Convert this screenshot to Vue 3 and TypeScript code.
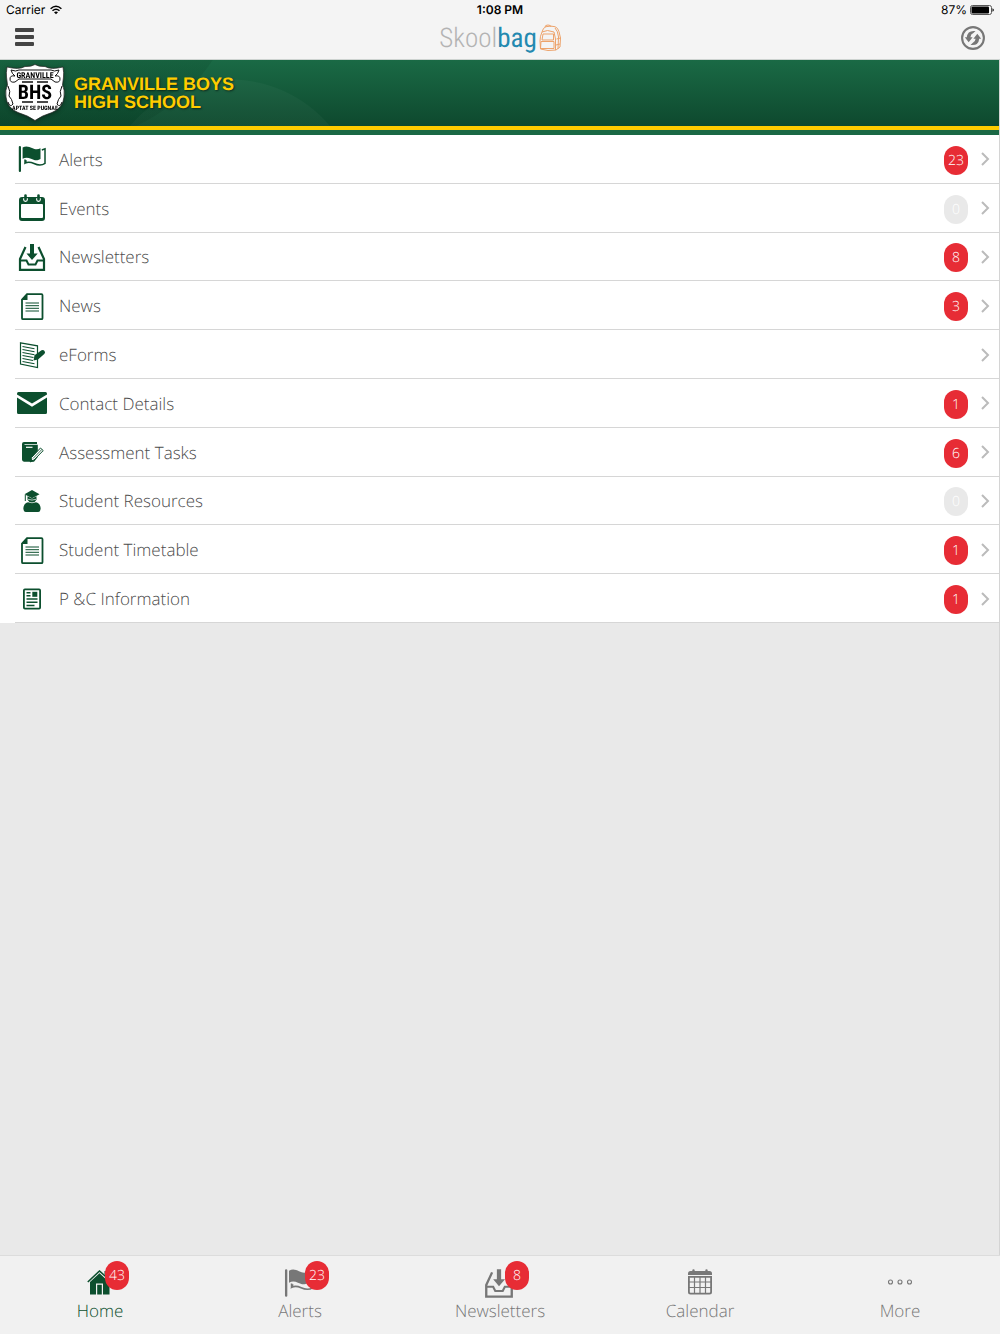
<script setup lang="ts">
interface MenuRow {
  label: string
  icon: string
  count?: number
}

interface Tab {
  label: string
  icon: string
  count?: number
  active?: boolean
  large?: boolean
}

const rows: MenuRow[] = [
  { label: 'Alerts', icon: 'flag', count: 23 },
  { label: 'Events', icon: 'events', count: 0 },
  { label: 'Newsletters', icon: 'inbox', count: 8 },
  { label: 'News', icon: 'page', count: 3 },
  { label: 'eForms', icon: 'form' },
  { label: 'Contact Details', icon: 'mail', count: 1 },
  { label: 'Assessment Tasks', icon: 'book', count: 6 },
  { label: 'Student Resources', icon: 'student', count: 0 },
  { label: 'Student Timetable', icon: 'page', count: 1 },
  { label: 'P &C Information', icon: 'article', count: 1 },
]

const tabs: Tab[] = [
  { label: 'Home', icon: 'home', count: 43, active: true },
  { label: 'Alerts', icon: 'flag', count: 23, large: true },
  { label: 'Newsletters', icon: 'inbox', count: 8, large: true },
  { label: 'Calendar', icon: 'calendar' },
  { label: 'More', icon: 'more' },
]
</script>

<template>
  <div class="app">
    <svg class="sprites" aria-hidden="true">
      <symbol id="flag" viewBox="0 0 32 32">
        <path d="M2.800 4q0-1 1.100-1T5 4v24q0 1-1.100 1t-1.100-1z" fill="currentColor" />
        <path d="M6.600 4.500C10 2.500 13 3.500 16 5s5.500 2 8.500.3V16c-4 2.200-6.500 1-9.500-.3s-5.500-1.500-8.400 0z" fill="currentColor" />
        <path d="M25.800 7l3.200-1.200v14.500c-3.500 2.500-7.500 1.800-11 .2s-6-1.800-8.800-.5l1-2.800M9 16.500v4" fill="none" stroke="currentColor" stroke-width="1.500" />
      </symbol>
      <symbol id="events" viewBox="0 0 32 32">
        <path fill-rule="evenodd" d="M6 5h20q3 0 3 3v18q0 3-3 3H6q-3 0-3-3V8q0-3 3-3zM5 13v12q0 1 1 1h20q1 0 1-1V13q0-1-1-1H6q-1 0-1 1z" fill="currentColor" />
        <path d="M9.500 6v1.500M22.500 6v1.500" stroke="#fff" stroke-width="4.800" stroke-linecap="round" />
        <path d="M6 5.600h7M19 5.600h7" stroke="currentColor" stroke-width="1.400" />
        <path d="M9.500 3.500v4M22.500 3.500v4" stroke="currentColor" stroke-width="2.600" stroke-linecap="round" />
      </symbol>
      <symbol id="inbox" viewBox="0 0 32 32">
        <path d="M9.500 6L4 18v10.800h24V18L22.500 6" fill="none" stroke="currentColor" stroke-width="2.200" />
        <path d="M4 19.500h6.500l2 4h7l2-4H28" fill="none" stroke="currentColor" stroke-width="2" />
        <path d="M14 3h4v9.500h3.700L16 19l-5.500-6.500H14z" fill="currentColor" />
      </symbol>
      <symbol id="page" viewBox="0 0 32 32">
        <path d="M11 4.200h14.500q1 0 1 1v23q0 1-1 1h-18.500q-1 0-1-1V9.500z" fill="none" stroke="currentColor" stroke-width="1.800" />
        <path d="M11.500 3.500V10H5.500z" fill="currentColor" />
        <path d="M9.500 13h13.500M9.500 15.700h13.500M9.500 18.300h13.500M9.500 21h13.500" stroke="currentColor" stroke-width="1" />
      </symbol>
      <symbol id="form" viewBox="0 0 32 32">
        <path d="M4.500 3.800l17 3v21.700l-17-3.500z" fill="none" stroke="currentColor" stroke-width="1.200" />
        <path d="M6.500 7.500l12 2.200M6.500 10.500l12 2.200M6.500 13.500l12 2.200M6.500 16.500l11 2M6.500 19.500l10.500 2M6.500 22.500l12 2.200" stroke="currentColor" stroke-width="1.100" />
        <path d="M17.500 21.500l1-5.200 7-5q1.800-1 3 .6t-.2 3l-6.300 5.600z" fill="currentColor" />
      </symbol>
      <symbol id="mail" viewBox="0 0 32 32">
        <path d="M1 6.500q0-1.500 1.500-1.500h27q1.500 0 1.500 1.500v1L16 16.500 1 7.500z" fill="currentColor" />
        <path d="M1 10.500l15 9.300 15-9.300V25.500q0 1.500-1.500 1.500h-27Q1 27 1 25.500z" fill="currentColor" />
      </symbol>
      <symbol id="book" viewBox="0 0 32 32">
        <path d="M8 6h13v2H8.500v.8H21.800V21L18 25.800H8q-2-.3-2-2.300V8q0-2 2-2z" fill="currentColor" />
        <path d="M10 11.300h6.500" stroke="#fff" stroke-width="1.200" />
        <path d="M14.500 25.500l1-4L24.500 12l2.700 2.600L18 24z" fill="#fff" stroke="currentColor" stroke-width="1" />
        <path d="M17 22.500l8.800-9M14 26l3-1.200-1.800-1.500z" stroke="currentColor" fill="currentColor" stroke-width=".8" />
      </symbol>
      <symbol id="student" viewBox="0 0 32 32">
        <path d="M16 5l7.500 4.200-7.500 4-7.500-4z" fill="currentColor" />
        <path d="M11.500 11.200l4.500 2.300 4.500-2.300v3.500q-1.500 2.900-4.500 2.900T11.500 14.700z" fill="currentColor" />
        <path d="M9.300 10v6" stroke="currentColor" stroke-width="1" />
        <path d="M8 26q-1.500-3 .5-6.500 1.300-2 3.500-2.200l4 1 4-1q2.200.2 3.500 2.200 2 3.500.5 6.500-.5 1-2 1H10q-1.500 0-2-1z" fill="currentColor" />
        <path d="M12 14.300q4 1.600 8 0" stroke="#fff" stroke-width=".7" fill="none" />
      </symbol>
      <symbol id="article" viewBox="0 0 32 32">
        <rect x="7.900" y="6.400" width="16.200" height="19.200" rx="1" fill="none" stroke="currentColor" stroke-width="1.800" />
        <path d="M10.500 9.700h4M10.500 12.800h4M10.500 16h11M10.500 19.200h11M10.500 22.400h8" stroke="currentColor" stroke-width="1.500" />
        <path d="M16.300 8.800h5v5h-5z" fill="currentColor" />
      </symbol>
      <symbol id="home" viewBox="0 0 32 32">
        <path d="M3.800 16L15.500 5l12.200 11" fill="none" stroke="currentColor" stroke-width="1.600" />
        <path d="M20.500 5h3v6l-3-2.700z" fill="currentColor" />
        <path fill-rule="evenodd" d="M6 16l9.500-8.800L25.500 16.500V28.500H6zM12 17.500v11h1.200v-9.800h4.600v9.800H19v-11z" fill="currentColor" />
      </symbol>
      <symbol id="calendar" viewBox="0 0 32 32">
        <path d="M6.500 5h19q2.500 0 2.500 2.500V9H4V7.500Q4 5 6.500 5z" fill="currentColor" />
        <path d="M9.500 4.500v2M22.500 4.500v2" stroke="currentColor" stroke-width="2.400" stroke-linecap="round" />
        <path d="M4.900 10.800h22.200v15.200q0 1.600-1.600 1.600H6.500q-1.600 0-1.600-1.600z" fill="none" stroke="currentColor" stroke-width="1.800" />
        <path d="M10.500 10v17.500M16 10v17.500M21.500 10v17.500M5 16h22M5 21.500h22" stroke="currentColor" stroke-width="1.200" />
      </symbol>
      <symbol id="more" viewBox="0 0 32 32">
        <g fill="none" stroke="currentColor" stroke-width="1.100">
          <circle cx="6.500" cy="16" r="2" /><circle cx="16" cy="16" r="2" /><circle cx="25.500" cy="16" r="2" />
        </g>
      </symbol>
    </svg>

    <header class="top">
      <div class="status">
        <span class="carrier">
          Carrier
          <svg width="12" height="10" viewBox="0 0 12 10" fill="none" stroke="#000" stroke-width="1.500" aria-hidden="true">
            <path d="M.6 3.700Q6-1.200 11.400 3.700M2.500 5.800q3.500-3 7 0" />
            <path d="M6 9.300L4 7.300q2-1.500 4 0z" fill="#000" stroke="none" />
          </svg>
        </span>
        <span class="clock">1:08 PM</span>
        <span class="power">
          87%
          <svg width="24" height="10" viewBox="0 0 24 10" aria-hidden="true">
            <rect x=".5" y=".5" width="21" height="9" rx="2" fill="none" stroke="#555" />
            <rect x="1.500" y="1.500" width="17.500" height="7" rx="1" />
            <path d="M22.500 3.200q1.300.5 1.300 1.800t-1.300 1.800z" />
          </svg>
        </span>
      </div>
      <div class="bar">
        <button class="menu" type="button" aria-label="Menu"><i></i><i></i><i></i></button>
        <div class="logo">
          <span class="skool">Skool</span><span class="bag">bag</span>
          <svg width="24" height="28" viewBox="0 0 24 28" fill="none" stroke="#eda36b" stroke-width="1" aria-hidden="true">
            <path d="M4 8q1-4.500 4-5.300 5-1.200 9 0 3 1 4 5l1.500 6.300-.5 9-4 3-8 .5-7.500-1.500-.5-8q0-5 2-9z" />
            <path d="M7 3q0-2 3-2t3 2M4 8q5-3 12 0l1.500 7v11M5 10h10.500v6H4zM3 17.500h13v7H2.500zM17 4q3 3 3.500 9l-.5 12M18.500 15l4-1M18 21l4-1" />
          </svg>
        </div>
        <button class="sync" type="button" aria-label="Refresh">
          <svg width="26" height="26" viewBox="0 0 26 26" aria-hidden="true">
            <circle cx="13" cy="13" r="10.900" fill="none" stroke="#777" stroke-width="2.100" />
            <g fill="#777">
              <path d="M15.500 6Q7.500 5 6.800 12.300H4.800l3.900 5 3.900-5h-2.200q.3-3.300 3-4.300z" />
              <path d="M10.500 20q8 1 8.700-6.300h2l-3.900-5-3.900 5h2.200q-.3 3.300-3 4.300z" />
            </g>
          </svg>
        </button>
      </div>
    </header>

    <main class="main">
      <section class="banner">
        <svg class="crest" width="60" height="58" viewBox="0 0 60 58" aria-hidden="true">
          <path d="M2 3q12 3 18-.5Q26 3 30 .5 34 3 40 2.500q6 3.500 18 .5 1 6 .5 10l-1 8q2.500 5 1.500 12-1 11-12 15.500-10 3-17 8-7-5-17-8Q2 44 1 33q-1-7 1.500-12l-1-8Q1 9 2 3z" fill="#fff" stroke="#222" stroke-width=".7" />
          <path d="M6 6q5 2 8 0h32q3 2 8 0-1 4-4 6 5-1 5 3t-5 3l-4-3H14l-4 3q-5 1-5-3t5-3q-3-2-4-6zM3 22q3 6 1 10 3 3 4 8M57 22q-3 6-1 10-3 3-4 8M8 40q-3 4-5-2M52 40q3 4 5-2" fill="none" stroke="#111" stroke-width="1" />
          <text x="30" y="14" text-anchor="middle" font-size="8">GRANVILLE</text>
          <text x="30" y="35" text-anchor="middle" font-size="20">BHS</text>
          <path d="M17 18h11M32 18h11M17 38h11M32 38h11" stroke="#111" stroke-width="1.500" />
          <text x="30" y="46" text-anchor="middle" font-size="6">APTAT SE PUGNAE</text>
        </svg>
        <h1>GRANVILLE BOYS<br>HIGH SCHOOL</h1>
      </section>

      <ul class="list">
        <li v-for="row in rows" :key="row.label">
          <a href="#">
            <svg class="icon" aria-hidden="true"><use :href="'#' + row.icon" /></svg>
            <span class="label">{{ row.label }}</span>
            <span v-if="row.count !== undefined" class="badge" :class="{ empty: row.count === 0 }">{{ row.count }}</span>
            <svg class="chevron" width="9" height="14" viewBox="0 0 9 14" fill="none" stroke="#bbb" stroke-width="2" aria-hidden="true">
              <path d="M1 1l6 6-6 6" />
            </svg>
          </a>
        </li>
      </ul>
    </main>

    <nav class="tabs">
      <a v-for="tab in tabs" :key="tab.label" href="#" :class="{ active: tab.active }">
        <span class="glyph">
          <svg class="icon" :class="{ large: tab.large }" aria-hidden="true"><use :href="'#' + tab.icon" /></svg>
          <span v-if="tab.count" class="badge">{{ tab.count }}</span>
        </span>
        <span>{{ tab.label }}</span>
      </a>
    </nav>
  </div>
</template>

<style>
body {
  margin: 0;
}
</style>

<style scoped>
* {
  box-sizing: border-box;
}

.app {
  display: flex;
  flex-direction: column;
  min-height: 100vh;
  background: #e9e9e9;
  font-family: 'Open Sans', sans-serif;
  font-weight: 300;
  text-rendering: geometricPrecision;
}

.sprites {
  display: none;
}

a {
  color: inherit;
  text-decoration: none;
}

button {
  padding: 0;
  border: 0;
  background: none;
}

svg {
  flex: none;
}

.top {
  background: #f4f4f4;
  border-bottom: 1px solid #cdd3d0;
}

.status,
.bar {
  display: grid;
  grid-template-columns: 1fr auto 1fr;
  align-items: center;
}

.status {
  height: 20px;
  padding: 0 6px;
  font: 400 12px/20px Inter, sans-serif;
  color: #000;
}

.carrier,
.power {
  display: flex;
  align-items: center;
  gap: 5px;
}

.power {
  justify-content: flex-end;
  gap: 3px;
}

.clock {
  font-weight: 600;
}

.bar {
  height: 39px;
  padding: 0 14px 3px 15px;
}

.menu {
  display: flex;
  flex-direction: column;
  gap: 3px;
  width: 19px;
  margin-bottom: 3px;
}

.menu i {
  height: 4px;
  border-radius: 1px;
  background: #444;
}

.logo {
  display: flex;
  align-items: center;
  font: 300 27px/36px 'Roboto Condensed', Roboto, sans-serif;
}

.logo svg {
  margin-left: 1px;
}

.skool {
  color: #b3b3b3;
}

.bag {
  color: #2389b0;
  font-weight: 400;
}

.sync {
  display: flex;
  justify-self: end;
}

.main {
  flex: 1;
  border-right: 1px solid #d4d4d4;
}

.banner {
  display: flex;
  align-items: center;
  gap: 9px;
  height: 75px;
  padding: 0 5px 9px;
  background:
    linear-gradient(#fc0, #fc0) 0 66px / 100% 4px no-repeat,
    linear-gradient(#1a6845, #1a6845) 0 70px / 100% 5px no-repeat,
    radial-gradient(circle at 60px -100px, rgba(0, 40, 20, 0.12) 182px, transparent 183px),
    radial-gradient(circle at 230px 150px, rgba(255, 255, 255, 0.03) 130px, transparent 131px),
    linear-gradient(#1a6a45, #0e492e 66px);
}

.crest {
  font-family: 'Roboto Condensed', Roboto, sans-serif;
  font-weight: 700;
  filter: drop-shadow(0 1px 2px #0006);
}

h1 {
  margin: 0;
  color: #fc0;
  font: 700 18px/18px 'Liberation Sans', sans-serif;
  text-shadow: 1px 1px 2px #0008;
}

.list {
  display: grid;
  grid-auto-rows: 1fr;
  min-height: 488px;
  margin: 0;
  padding: 0 0 0 15px;
  list-style: none;
  background: #fff;
}

.list li {
  border-bottom: 1px solid #d6d6d6;
}

.list a {
  display: flex;
  align-items: center;
  height: 100%;
  padding: 1px 9px 0 0;
  color: #4c4c4c;
  font-size: 17px;
}

.icon {
  display: block;
  width: 32px;
  height: 32px;
}

.list .icon {
  margin: 0 11px 0 1px;
  color: #0c4f2e;
}

.label {
  flex: 1;
}

.badge {
  width: 24px;
  height: 29px;
  border-radius: 12px;
  background: #e72c35;
  color: #fff;
  font-size: 14px;
  line-height: 29px;
  text-align: center;
}

.list .badge {
  margin-top: 2px;
}

.badge.empty {
  background: #e9e9e9;
}

.chevron {
  margin-left: 13px;
}

.tabs {
  display: grid;
  grid-template-columns: repeat(5, 1fr);
  height: 79px;
  border-top: 1px solid #dcdcdc;
  background: #f1f1f1;
}

.tabs a {
  display: flex;
  flex-direction: column;
  align-items: center;
  padding-top: 10px;
  color: #777;
  font-size: 17px;
  line-height: 26px;
}

.tabs a.active {
  color: #0c4f2e;
}

.glyph {
  position: relative;
}

.icon.large {
  width: 34px;
  height: 34px;
  margin: 0 0 -2px -2px;
}

.glyph .badge {
  position: absolute;
  top: -5px;
  left: 21px;
}
</style>
